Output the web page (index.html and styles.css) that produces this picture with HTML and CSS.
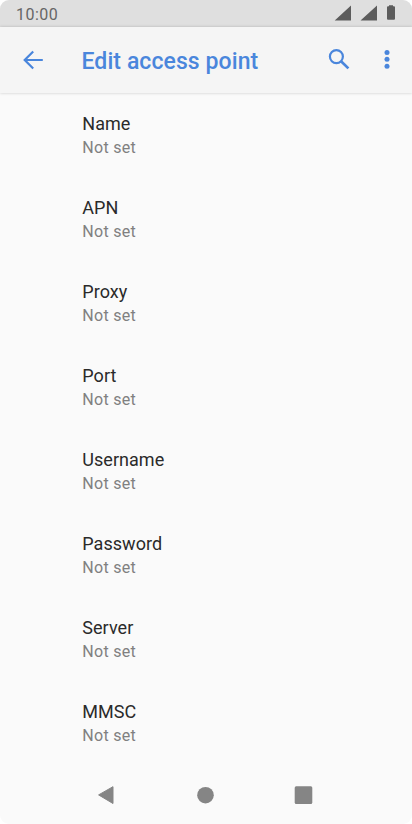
FILE: index.html
```html
<!DOCTYPE html>
<html lang="en">
<head>
<meta charset="utf-8">
<title>Edit access point</title>
<link rel="stylesheet" href="styles.css">
</head>
<body>
<div class="screen">
<header class="status"><span class="time">10:00</span>
<svg class="status-icons" width="62" height="27" viewBox="0 0 62 27"><path d="M0.7 20.5L17 5.5V20.5ZM26.5 20.5L43 5.5V20.5Z"/><path d="M55 6.3V5.3h4v1h1q1 0 1 1v11.4q0 1-1 1h-6q-1 0-1-1V7.3q0-1 1-1z"/></svg></header>
<div class="toolbar">
<svg class="back" width="28" height="28" viewBox="0 0 28 28"><path d="M23.8 14H6.2M14.2 5.5L5.7 14L14.2 22.5"/></svg>
<h1>Edit access point</h1>
<svg class="search" width="28" height="28" viewBox="0 0 28 28"><circle cx="11.4" cy="10.6" r="6.5"/><path class="handle" d="M15.8 15L23.4 22.4"/></svg>
<svg class="more" width="28" height="28" viewBox="0 0 28 28"><circle cx="14" cy="6.4" r="2.5"/><circle cx="14" cy="13.3" r="2.5"/><circle cx="14" cy="20.2" r="2.5"/></svg>
</div>
<main>
<div class="item"><h2>Name</h2><p>Not set</p></div>
<div class="item"><h2>APN</h2><p>Not set</p></div>
<div class="item"><h2>Proxy</h2><p>Not set</p></div>
<div class="item"><h2>Port</h2><p>Not set</p></div>
<div class="item"><h2>Username</h2><p>Not set</p></div>
<div class="item"><h2>Password</h2><p>Not set</p></div>
<div class="item"><h2>Server</h2><p>Not set</p></div>
<div class="item"><h2>MMSC</h2><p>Not set</p></div>
</main>
<nav><svg width="216" height="20" viewBox="0 0 216 20"><path d="M0.6 9.9L15 1.7V18.5Z"/><circle cx="107.5" cy="10.2" r="8.3"/><rect x="196.7" y="1.3" width="17.6" height="17.6" rx="1.5"/></svg></nav>
</div>
</body>
</html>
```
FILE: styles.css
```css
body{margin:0;background:#fff;font-family:Roboto,sans-serif}
.screen{width:412px;height:824px;background:#fafafa;display:flex;flex-direction:column;overflow:hidden;border-radius:9px}
.status{height:27px;background:#dfdfdf;display:flex;align-items:center;justify-content:space-between;padding:1px 16px 0;box-sizing:border-box;flex:none}
.time{font-size:16px;color:#666;letter-spacing:.5px}
.status-icons{fill:#5c5c5c;margin-top:-1px}
.toolbar{height:66px;background:#f5f5f5;display:flex;align-items:center;padding:0 11px 0 19px;box-sizing:border-box;flex:none;fill:#4a86dc;box-shadow:0 0 3px #0003}
h1{margin:0 auto 0 34.5px;padding-top:3px;font-size:23px;font-weight:500;color:#4a86dc;line-height:28px;letter-spacing:.08px}
.back,.search{fill:none;stroke:#4a86dc;stroke-width:2.2}
.search .handle{stroke-width:2.7}
.more{margin-left:20px}
main{flex:none;height:673px;padding-top:8px;box-sizing:border-box}
.item{height:84px;padding:10px 0 0 82.3px;box-sizing:border-box}
h2{margin:0;font-size:18px;font-weight:400;line-height:25px;color:#2a2a2a;letter-spacing:.04px}
p{margin:0;font-size:16px;line-height:23px;color:#808080;letter-spacing:.3px}
nav{height:58px;flex:none;display:flex;justify-content:center;align-items:center;fill:#858585}
nav path{stroke:#858585;stroke-width:1;stroke-linejoin:round}
```
